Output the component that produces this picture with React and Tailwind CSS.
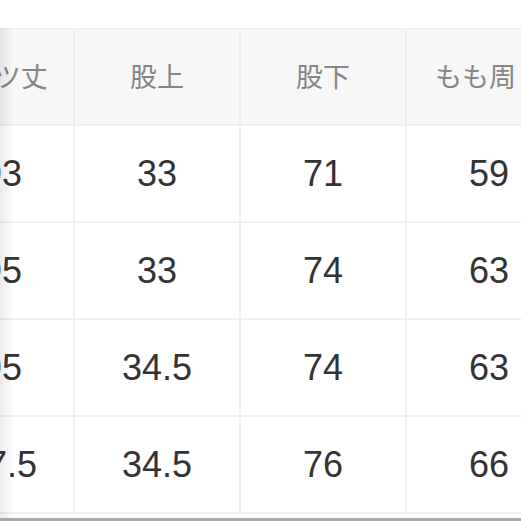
import React from "react";

const headers = ["パンツ丈", "股上", "股下", "もも周り", "裾幅"];
const rows = [
  ["93", "33", "71", "59", "20"],
  ["95", "33", "74", "63", "21"],
  ["95", "34.5", "74", "63", "21"],
  ["97.5", "34.5", "76", "66", "22"],
];

export default function App() {
  return (
    <div className="relative w-[521px] h-[521px] overflow-hidden bg-white">
      <div className="pt-[28px]">
        <div className="ml-[-91px] w-[830px] border-t border-[#efefef]">
          <div className="grid grid-cols-[repeat(5,166px)]">
            {headers.map((h, i) => (
              <div
                key={i}
                className={
                  "h-[97px] flex items-center justify-center bg-[#f7f7f7] border-r-2 border-b-2 border-[#efefef] text-[27px] text-[#858585] whitespace-nowrap overflow-visible " +
                  (i === 0 ? "pl-[4px]" : "")
                }
                style={{ fontFamily: '"Noto Sans CJK JP", "Noto Sans", sans-serif' }}
              >
                {h}
              </div>
            ))}
            {rows.map((r, ri) =>
              r.map((c, ci) => (
                <div
                  key={ri + "-" + ci}
                  className={
                    "h-[97px] flex items-center justify-center bg-white border-r-2 border-b-2 border-[#f0f0f0] text-[36px] text-[#333333] " +
                    (ci === 0 ? "pl-[22px]" : "")
                  }
                  style={{ fontFamily: '"Liberation Sans", Arial, sans-serif' }}
                >
                  {c}
                </div>
              ))
            )}
          </div>
        </div>
      </div>
      <div className="absolute left-0 top-[28px] bottom-0 w-[14px] bg-gradient-to-r from-[#00000014] to-transparent" />
      <div className="absolute left-0 right-0 bottom-0 h-[3px] bg-[#a8a8a8]" />
    </div>
  );
}
